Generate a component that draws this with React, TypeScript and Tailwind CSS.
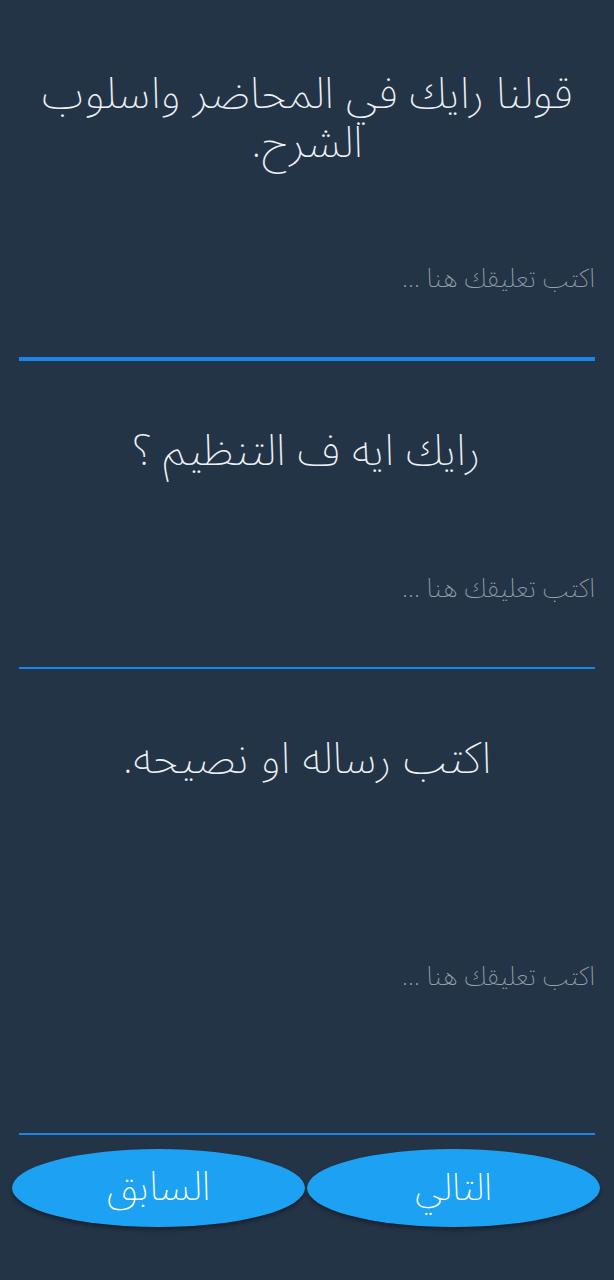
export default function App() {
  const font = { fontFamily: '"Noto Sans Arabic", "DejaVu Sans", sans-serif' };
  return (
    <div
      dir="rtl"
      className="min-h-screen w-full bg-[#243447] flex flex-col text-[#eef2f6] font-extralight"
      style={font}
    >
      {/* سؤال 1 */}
      <section className="px-[19px] pt-[70px]">
        <h2 className="text-center text-[44px] leading-[49px] font-extralight">
          قولنا رايك في المحاضر واسلوب
          <br />
          الشرح.
        </h2>
        <div className="h-[96px]" />
        <p className="text-[26px] leading-[30px] text-[#95a1ad] font-extralight">اكتب تعليقك هنا ...</p>
        <div className="h-[63px]" />
        <div className="h-[4px] bg-[#1a85e8]" />
      </section>

      {/* سؤال 2 */}
      <section className="px-[19px] pt-[66px]">
        <h2 className="text-center text-[44px] leading-[48px] font-extralight">رايك ايه ف التنظيم ؟</h2>
        <div className="h-[99px]" />
        <p className="text-[26px] leading-[30px] text-[#95a1ad] font-extralight">اكتب تعليقك هنا ...</p>
        <div className="h-[63px]" />
        <div className="h-[2px] bg-[#1a85e8]" />
      </section>

      {/* سؤال 3 */}
      <section className="px-[19px] pt-[66px]">
        <h2 className="text-center text-[44px] leading-[48px] font-extralight">اكتب رساله او نصيحه.</h2>
        <div className="h-[179px]" />
        <p className="text-[26px] leading-[30px] text-[#95a1ad] font-extralight">اكتب تعليقك هنا ...</p>
        <div className="h-[141px]" />
        <div className="h-[2px] bg-[#1a85e8]" />
      </section>

      {/* الأزرار */}
      <div className="flex flex-row-reverse gap-[2px] pl-[12px] pr-[14px] pt-[14px]">
        <button className="flex-1 h-[78px] rounded-[50%] bg-[#1da1f2] shadow-[0_3px_4px_rgba(0,0,0,0.35)] text-[40px] text-white font-extralight">
          السابق
        </button>
        <button className="flex-1 h-[78px] rounded-[50%] bg-[#1da1f2] shadow-[0_3px_4px_rgba(0,0,0,0.35)] text-[38px] text-white font-extralight">
          التالي
        </button>
      </div>
    </div>
  );
}
